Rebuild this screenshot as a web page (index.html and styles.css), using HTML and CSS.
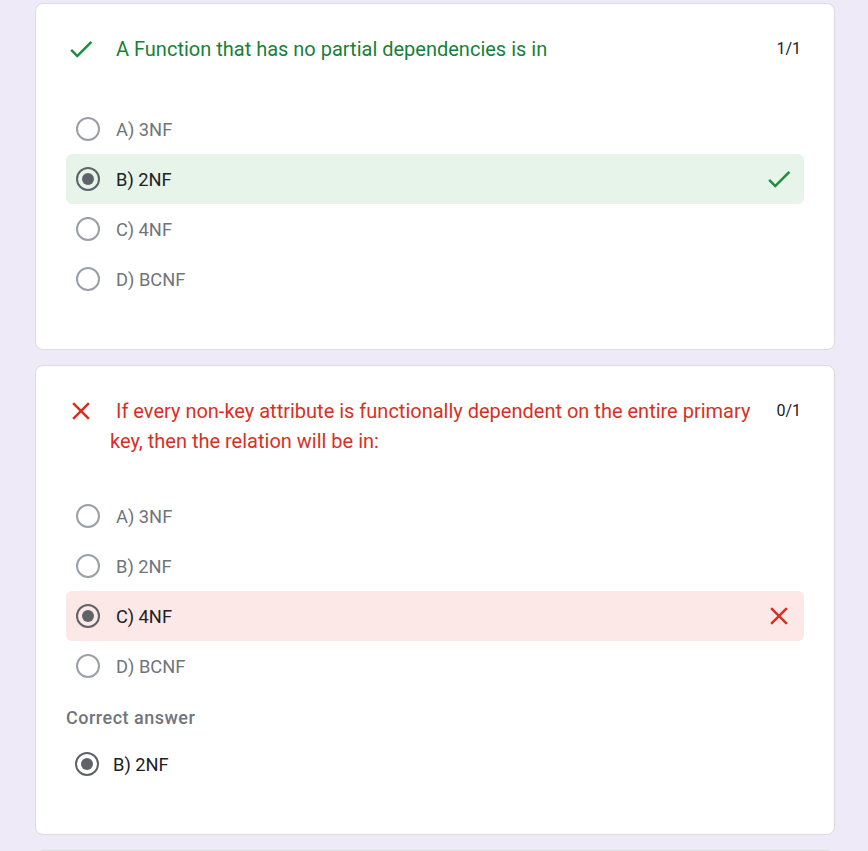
FILE: index.html
```html
<!DOCTYPE html>
<html>
<head>
<meta charset="utf-8">
<link rel="stylesheet" href="styles.css">
</head>
<body>
<div class="page">
  <section class="card">
    <div class="head">
      <span class="icon ok"><svg viewBox="0 0 24 24"><path d="M9 16.17L4.83 12l-1.42 1.41L9 19 21 7l-1.41-1.41z"/></svg></span>
      <div class="title ok">A Function that has no partial dependencies is in</div>
      <div class="score">1/1</div>
    </div>
    <div class="opt"><span class="radio"></span><span class="lbl">A) 3NF</span></div>
    <div class="opt sel good"><span class="radio on"></span><span class="lbl">B) 2NF</span><span class="icon ok mark"><svg viewBox="0 0 24 24"><path d="M9 16.17L4.83 12l-1.42 1.41L9 19 21 7l-1.41-1.41z"/></svg></span></div>
    <div class="opt"><span class="radio"></span><span class="lbl">C) 4NF</span></div>
    <div class="opt"><span class="radio"></span><span class="lbl">D) BCNF</span></div>
  </section>

  <section class="card">
    <div class="head">
      <span class="icon bad"><svg viewBox="0 0 24 24"><path d="M19 6.41L17.59 5 12 10.59 6.41 5 5 6.41 10.59 12 5 17.59 6.41 19 12 13.41 17.59 19 19 17.59 13.41 12z"/></svg></span>
      <div class="title bad">If every non-key attribute is functionally dependent on the entire primary key, then the relation will be in:</div>
      <div class="score">0/1</div>
    </div>
    <div class="opt"><span class="radio"></span><span class="lbl">A) 3NF</span></div>
    <div class="opt"><span class="radio"></span><span class="lbl">B) 2NF</span></div>
    <div class="opt sel wrong"><span class="radio on"></span><span class="lbl">C) 4NF</span><span class="icon bad mark"><svg viewBox="0 0 24 24"><path d="M19 6.41L17.59 5 12 10.59 6.41 5 5 6.41 10.59 12 5 17.59 6.41 19 12 13.41 17.59 19 19 17.59 13.41 12z"/></svg></span></div>
    <div class="opt"><span class="radio"></span><span class="lbl">D) BCNF</span></div>
    <div class="correct-label">Correct answer</div>
    <div class="opt answer sel"><span class="radio on"></span><span class="lbl">B) 2NF</span></div>
  </section>

  <section class="card stub"></section>
</div>
</body>
</html>
```

FILE: styles.css
```css
html, body {
  margin: 0;
  padding: 0;
  background: #eeeaf7;
  font-family: Roboto, "Liberation Sans", Arial, sans-serif;
}

.page {
  padding: 3px 0 0 35px;
  width: 800px;
  display: flex;
  flex-direction: column;
  gap: 15px;
}

.card {
  background: #fff;
  border: 1px solid #dadce0;
  border-radius: 8px;
  padding: 30px 30px 45px 30px;
}

.card.stub {
  height: 40px;
  padding: 0;
}

.head {
  display: flex;
  align-items: flex-start;
  min-height: 35px;
  margin-bottom: 35px;
}

.icon {
  width: 30px;
  height: 30px;
  flex: none;
  display: flex;
}

.icon svg {
  width: 30px;
  height: 30px;
}

.icon.ok svg { fill: #1e8e3e; }
.icon.bad svg { fill: #d93025; }

.title {
  flex: 1;
  margin-left: 14px;
  text-indent: 6px;
  font-size: 20px;
  line-height: 30px;
}

.title.ok { color: #188038; }
.title.bad { color: #d93025; }

.score {
  flex: none;
  margin-left: 20px;
  margin-right: 3px;
  font-size: 16px;
  line-height: 30px;
  color: #202124;
}

.opt {
  display: flex;
  align-items: center;
  height: 50px;
  padding: 0 10px;
  border-radius: 6px;
}

.opt.good { background: #e6f4ea; }
.opt.wrong { background: #fce8e6; }

.radio {
  box-sizing: border-box;
  width: 24px;
  height: 24px;
  border: 2px solid #9aa0a6;
  border-radius: 50%;
  flex: none;
  display: flex;
  align-items: center;
  justify-content: center;
}

.radio.on {
  border-color: #5f6368;
}

.radio.on::after {
  content: "";
  width: 12px;
  height: 12px;
  border-radius: 50%;
  background: #5f6368;
}

.lbl {
  margin-left: 16px;
  font-size: 18.3px;
  color: #70757a;
  flex: 1;
}

.opt.sel .lbl { color: #202124; }

.mark { margin-left: auto; }

.correct-label {
  margin-top: 17px;
  font-size: 18px;
  letter-spacing: 0.5px;
  line-height: 20px;
  font-weight: 500;
  color: #70757a;
}

.opt.answer {
  margin-top: 11px;
  padding-left: 9px;
}

.opt.answer .lbl { margin-left: 14px; }
```
